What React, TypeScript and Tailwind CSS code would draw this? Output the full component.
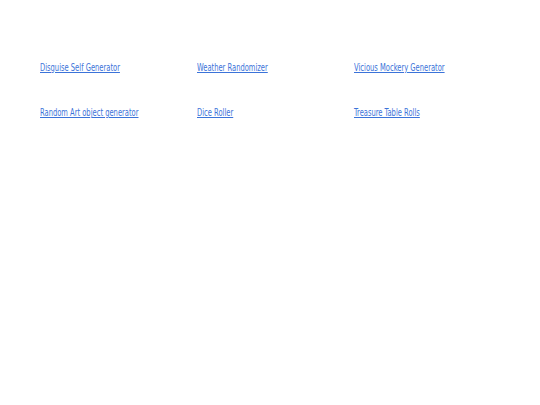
const LINKS = [
  "Disguise Self Generator",
  "Weather Randomizer",
  "Vicious Mockery Generator",
  "Random Art object generator",
  "Dice Roller",
  "Treasure Table Rolls",
];

export default function App() {
  return (
    <div className="min-h-[405px] w-full bg-white">
      <div className="grid grid-cols-[157px_157px_157px] gap-y-[33px] px-[40px] pt-[62px]">
        {LINKS.map((label) => (
          <div key={label} className="flex h-[12px] items-center">
            <a
              href="#"
              className="inline-block origin-left scale-x-[0.75] whitespace-nowrap font-['DejaVu_Sans_Condensed','DejaVu_Sans',sans-serif] text-[10px] leading-[12px] text-[#3b73d9] underline"
            >
              {label}
            </a>
          </div>
        ))}
      </div>
    </div>
  );
}
